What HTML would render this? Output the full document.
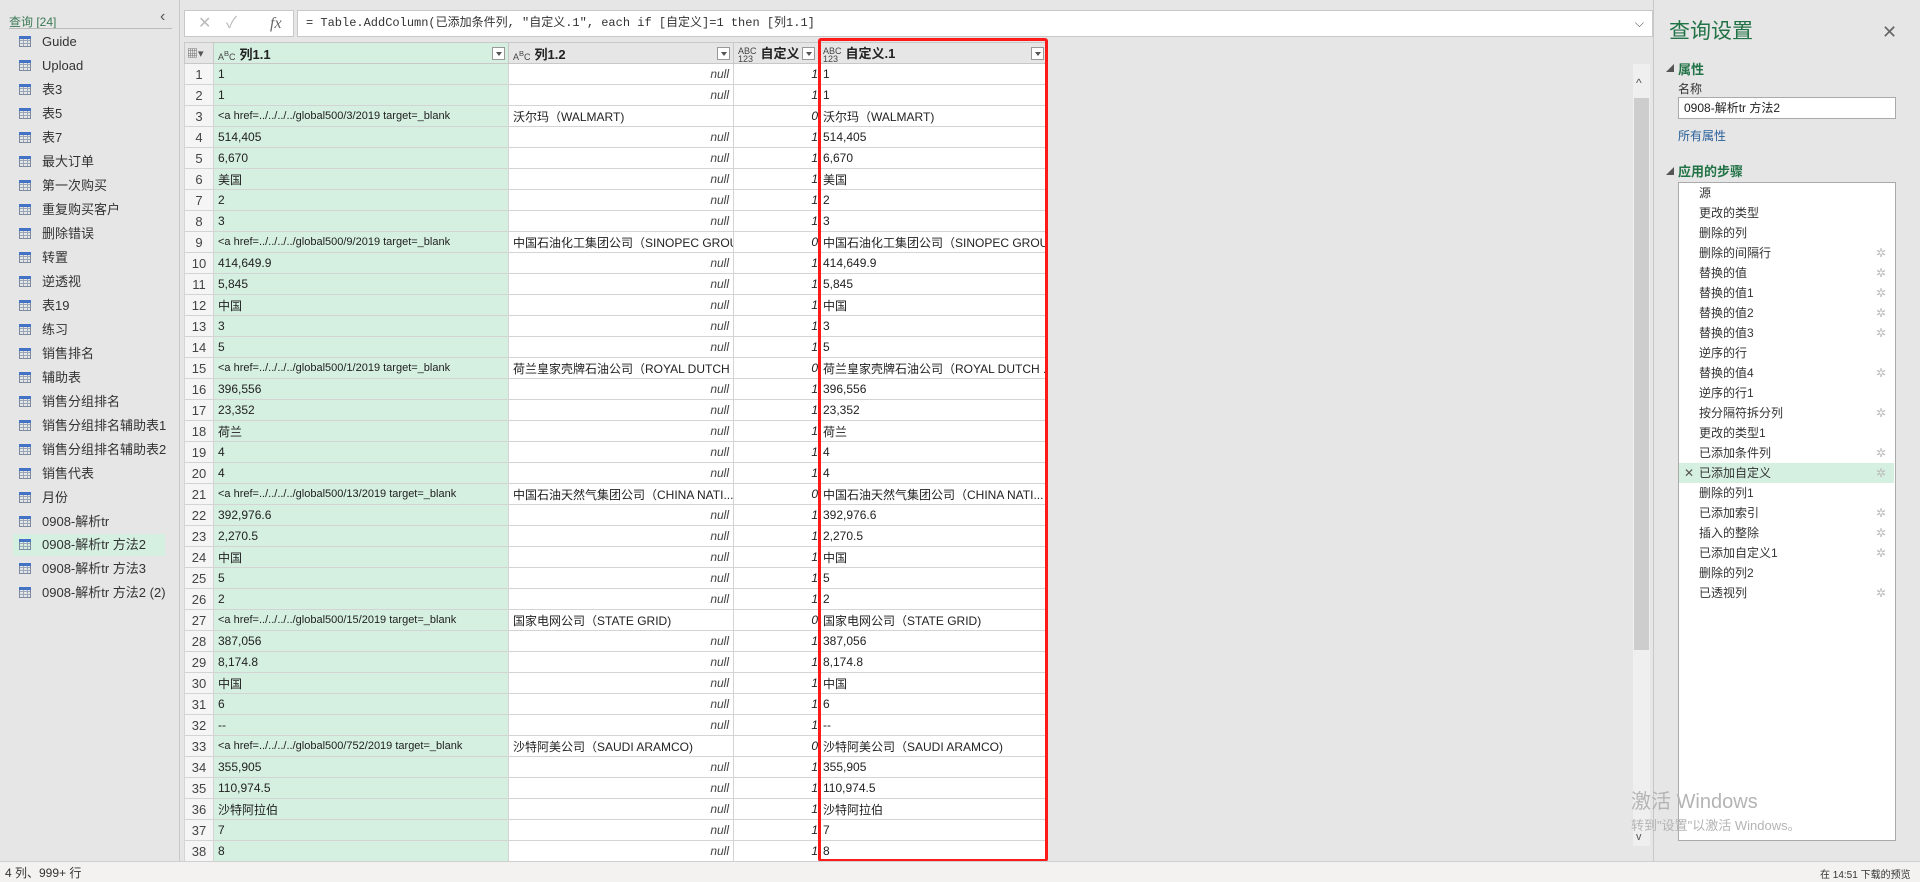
<!DOCTYPE html>
<html><head><meta charset="utf-8"><style>
*{box-sizing:border-box;margin:0;padding:0}
body{width:1920px;height:882px;overflow:hidden;background:#e6e6e6;font-family:"Liberation Sans","Noto Sans CJK SC",sans-serif;position:relative;color:#222}
.abs{position:absolute}
.lp-item{position:absolute;left:0;width:175px;height:22px;font-size:13px;line-height:22px;padding-left:42px;color:#333;white-space:nowrap}
.lp-item i{position:absolute;left:19px;top:5px;width:12px;height:11px;border:1px solid #7a8aa0;background:repeating-linear-gradient(90deg,transparent 0 3px,#9aa7b8 3px 4px),repeating-linear-gradient(0deg,transparent 0 2px,#9aa7b8 2px 3px);}
.lp-item i:before{content:"";position:absolute;left:-1px;top:-1px;width:12px;height:3px;background:#4472c4}
table{border-collapse:collapse;position:absolute;left:184px;top:42px;width:863px;table-layout:fixed;font-size:12px}
td,th{border:1px solid #d4d4d4;height:21px;padding:0 4px;white-space:nowrap;overflow:hidden;font-weight:normal}
th{background:#e6e6e6;text-align:left;border-color:#c8c8c8;position:relative;font-size:13px;font-weight:bold}
td.n{color:#444;font-size:13px;padding:0;background:#f5f5f5;text-align:center}
td.c1{background:#d5efe0}
td.c2{background:#fff;text-align:right;font-style:italic;color:#444}
td.c2.t{text-align:left;font-style:normal;color:#222}
td.c3{background:#fff;text-align:right;font-style:italic;padding-right:0}
td.c4{background:#fff}
.dd{position:absolute;right:3px;top:4px;width:13px;height:13px;border:1px solid #999;background:#fff}
.dd:after{content:"";position:absolute;left:3px;top:4px;border:3px solid transparent;border-top:4px solid #555}
.ty{font-size:9px;font-weight:normal;color:#444;display:inline-block;line-height:8px;vertical-align:middle;margin-right:4px}
.step{position:absolute;left:1679px;width:215px;height:20px;font-size:12px;line-height:20px;padding-left:20px;color:#333}
.g{position:absolute;right:8px;top:0;color:#bbb;font-size:12px}
</style></head><body>
<div class="abs" style="left:9px;top:13px;font-size:12px;color:#3c7a55">查询 [24]</div>
<div class="abs" style="left:9px;top:28px;width:163px;height:1px;background:#bbb"></div>
<div class="abs" style="left:160px;top:8px;font-size:16px;color:#555">‹</div>
<div class="abs" style="left:179px;top:0;width:1px;height:861px;background:#c8c8c8"></div>
<div class="lp-item" style="top:31px"><i></i>Guide</div>
<div class="lp-item" style="top:55px"><i></i>Upload</div>
<div class="lp-item" style="top:79px"><i></i>表3</div>
<div class="lp-item" style="top:103px"><i></i>表5</div>
<div class="lp-item" style="top:127px"><i></i>表7</div>
<div class="lp-item" style="top:151px"><i></i>最大订单</div>
<div class="lp-item" style="top:175px"><i></i>第一次购买</div>
<div class="lp-item" style="top:199px"><i></i>重复购买客户</div>
<div class="lp-item" style="top:223px"><i></i>删除错误</div>
<div class="lp-item" style="top:247px"><i></i>转置</div>
<div class="lp-item" style="top:271px"><i></i>逆透视</div>
<div class="lp-item" style="top:295px"><i></i>表19</div>
<div class="lp-item" style="top:319px"><i></i>练习</div>
<div class="lp-item" style="top:343px"><i></i>销售排名</div>
<div class="lp-item" style="top:367px"><i></i>辅助表</div>
<div class="lp-item" style="top:391px"><i></i>销售分组排名</div>
<div class="lp-item" style="top:415px"><i></i>销售分组排名辅助表1</div>
<div class="lp-item" style="top:439px"><i></i>销售分组排名辅助表2</div>
<div class="lp-item" style="top:463px"><i></i>销售代表</div>
<div class="lp-item" style="top:487px"><i></i>月份</div>
<div class="lp-item" style="top:511px"><i></i>0908-解析tr</div>
<div class="lp-item" style="top:534px;left:13px;width:152px;padding-left:29px;background:#d5efe0"><i style="left:6px"></i>0908-解析tr 方法2</div>
<div class="lp-item" style="top:558px"><i></i>0908-解析tr 方法3</div>
<div class="lp-item" style="top:582px"><i></i>0908-解析tr 方法2 (2)</div>

<div class="abs" style="left:184px;top:10px;width:110px;height:27px;background:#fff;border:1px solid #c8c8c8;font-size:16px;color:#bbb;line-height:25px">
<span class="abs" style="left:13px">✕</span><span class="abs" style="left:41px">✓</span><span class="abs" style="left:85px;font-family:'Liberation Serif',serif;font-style:italic;color:#666">fx</span></div>
<div class="abs" style="left:297px;top:10px;width:1356px;height:27px;background:#fff;border:1px solid #c8c8c8;font-family:'Liberation Mono','Noto Sans CJK SC',monospace;font-size:12px;line-height:25px;padding-left:8px;color:#333">= Table.AddColumn(已添加条件列, "自定义.1", each if [自定义]=1 then [列1.1]
<span class="abs" style="right:8px;top:0;color:#555;font-family:'Liberation Sans',sans-serif;font-size:12px">⌵</span></div>

<table>
<colgroup><col style="width:29px"><col style="width:295px"><col style="width:225px"><col style="width:85px"><col style="width:229px"></colgroup>
<tr><th style="background:#e6e6e6;font-weight:normal;color:#555;font-size:11px;padding:0 2px">▦▾</th><th style="background:#d5efe0"><span class="ty">A<sup>B</sup>C</span>列1.1<span class="dd"></span></th><th><span class="ty">A<sup>B</sup>C</span>列1.2<span class="dd"></span></th><th><span class="ty">ABC<br>123</span>自定义<span class="dd"></span></th><th><span class="ty">ABC<br>123</span>自定义.1<span class="dd"></span></th></tr>
<tr><td class="n">1</td><td class="c1">1</td><td class="c2">null</td><td class="c3">1</td><td class="c4">1</td></tr>
<tr><td class="n">2</td><td class="c1">1</td><td class="c2">null</td><td class="c3">1</td><td class="c4">1</td></tr>
<tr><td class="n">3</td><td class="c1" style="font-size:11px">&lt;a href=../../../../global500/3/2019 target=_blank</td><td class="c2 t">沃尔玛（WALMART)</td><td class="c3">0</td><td class="c4">沃尔玛（WALMART)</td></tr>
<tr><td class="n">4</td><td class="c1">514,405</td><td class="c2">null</td><td class="c3">1</td><td class="c4">514,405</td></tr>
<tr><td class="n">5</td><td class="c1">6,670</td><td class="c2">null</td><td class="c3">1</td><td class="c4">6,670</td></tr>
<tr><td class="n">6</td><td class="c1">美国</td><td class="c2">null</td><td class="c3">1</td><td class="c4">美国</td></tr>
<tr><td class="n">7</td><td class="c1">2</td><td class="c2">null</td><td class="c3">1</td><td class="c4">2</td></tr>
<tr><td class="n">8</td><td class="c1">3</td><td class="c2">null</td><td class="c3">1</td><td class="c4">3</td></tr>
<tr><td class="n">9</td><td class="c1" style="font-size:11px">&lt;a href=../../../../global500/9/2019 target=_blank</td><td class="c2 t">中国石油化工集团公司（SINOPEC GROU...</td><td class="c3">0</td><td class="c4">中国石油化工集团公司（SINOPEC GROU...</td></tr>
<tr><td class="n">10</td><td class="c1">414,649.9</td><td class="c2">null</td><td class="c3">1</td><td class="c4">414,649.9</td></tr>
<tr><td class="n">11</td><td class="c1">5,845</td><td class="c2">null</td><td class="c3">1</td><td class="c4">5,845</td></tr>
<tr><td class="n">12</td><td class="c1">中国</td><td class="c2">null</td><td class="c3">1</td><td class="c4">中国</td></tr>
<tr><td class="n">13</td><td class="c1">3</td><td class="c2">null</td><td class="c3">1</td><td class="c4">3</td></tr>
<tr><td class="n">14</td><td class="c1">5</td><td class="c2">null</td><td class="c3">1</td><td class="c4">5</td></tr>
<tr><td class="n">15</td><td class="c1" style="font-size:11px">&lt;a href=../../../../global500/1/2019 target=_blank</td><td class="c2 t">荷兰皇家壳牌石油公司（ROYAL DUTCH ...</td><td class="c3">0</td><td class="c4">荷兰皇家壳牌石油公司（ROYAL DUTCH ...</td></tr>
<tr><td class="n">16</td><td class="c1">396,556</td><td class="c2">null</td><td class="c3">1</td><td class="c4">396,556</td></tr>
<tr><td class="n">17</td><td class="c1">23,352</td><td class="c2">null</td><td class="c3">1</td><td class="c4">23,352</td></tr>
<tr><td class="n">18</td><td class="c1">荷兰</td><td class="c2">null</td><td class="c3">1</td><td class="c4">荷兰</td></tr>
<tr><td class="n">19</td><td class="c1">4</td><td class="c2">null</td><td class="c3">1</td><td class="c4">4</td></tr>
<tr><td class="n">20</td><td class="c1">4</td><td class="c2">null</td><td class="c3">1</td><td class="c4">4</td></tr>
<tr><td class="n">21</td><td class="c1" style="font-size:11px">&lt;a href=../../../../global500/13/2019 target=_blank</td><td class="c2 t">中国石油天然气集团公司（CHINA NATI...</td><td class="c3">0</td><td class="c4">中国石油天然气集团公司（CHINA NATI...</td></tr>
<tr><td class="n">22</td><td class="c1">392,976.6</td><td class="c2">null</td><td class="c3">1</td><td class="c4">392,976.6</td></tr>
<tr><td class="n">23</td><td class="c1">2,270.5</td><td class="c2">null</td><td class="c3">1</td><td class="c4">2,270.5</td></tr>
<tr><td class="n">24</td><td class="c1">中国</td><td class="c2">null</td><td class="c3">1</td><td class="c4">中国</td></tr>
<tr><td class="n">25</td><td class="c1">5</td><td class="c2">null</td><td class="c3">1</td><td class="c4">5</td></tr>
<tr><td class="n">26</td><td class="c1">2</td><td class="c2">null</td><td class="c3">1</td><td class="c4">2</td></tr>
<tr><td class="n">27</td><td class="c1" style="font-size:11px">&lt;a href=../../../../global500/15/2019 target=_blank</td><td class="c2 t">国家电网公司（STATE GRID)</td><td class="c3">0</td><td class="c4">国家电网公司（STATE GRID)</td></tr>
<tr><td class="n">28</td><td class="c1">387,056</td><td class="c2">null</td><td class="c3">1</td><td class="c4">387,056</td></tr>
<tr><td class="n">29</td><td class="c1">8,174.8</td><td class="c2">null</td><td class="c3">1</td><td class="c4">8,174.8</td></tr>
<tr><td class="n">30</td><td class="c1">中国</td><td class="c2">null</td><td class="c3">1</td><td class="c4">中国</td></tr>
<tr><td class="n">31</td><td class="c1">6</td><td class="c2">null</td><td class="c3">1</td><td class="c4">6</td></tr>
<tr><td class="n">32</td><td class="c1">--</td><td class="c2">null</td><td class="c3">1</td><td class="c4">--</td></tr>
<tr><td class="n">33</td><td class="c1" style="font-size:11px">&lt;a href=../../../../global500/752/2019 target=_blank</td><td class="c2 t">沙特阿美公司（SAUDI ARAMCO)</td><td class="c3">0</td><td class="c4">沙特阿美公司（SAUDI ARAMCO)</td></tr>
<tr><td class="n">34</td><td class="c1">355,905</td><td class="c2">null</td><td class="c3">1</td><td class="c4">355,905</td></tr>
<tr><td class="n">35</td><td class="c1">110,974.5</td><td class="c2">null</td><td class="c3">1</td><td class="c4">110,974.5</td></tr>
<tr><td class="n">36</td><td class="c1">沙特阿拉伯</td><td class="c2">null</td><td class="c3">1</td><td class="c4">沙特阿拉伯</td></tr>
<tr><td class="n">37</td><td class="c1">7</td><td class="c2">null</td><td class="c3">1</td><td class="c4">7</td></tr>
<tr><td class="n">38</td><td class="c1">8</td><td class="c2">null</td><td class="c3">1</td><td class="c4">8</td></tr>
</table>
<div class="abs" style="left:818px;top:38px;width:230px;height:824px;border:3px solid #ff1a1a;border-radius:3px"></div>

<div class="abs" style="left:1633px;top:64px;width:17px;height:782px;background:#efefef"></div>
<div class="abs" style="left:1634px;top:98px;width:15px;height:552px;background:#cdcdcd"></div>
<div class="abs" style="left:1636px;top:76px;font-size:12px;color:#555">^</div>
<div class="abs" style="left:1636px;top:831px;font-size:11px;color:#555">v</div>
<div class="abs" style="left:1653px;top:0;width:1px;height:861px;background:#c8c8c8"></div>

<div class="abs" style="left:1669px;top:15px;font-size:21px;color:#217346">查询设置</div>
<div class="abs" style="left:1882px;top:22px;font-size:18px;color:#666">✕</div>
<div class="abs" style="left:1666px;top:63px;font-size:8px;color:#555">◢</div>
<div class="abs" style="left:1678px;top:59px;font-size:13px;font-weight:bold;color:#217346">属性</div>
<div class="abs" style="left:1678px;top:80px;font-size:12px;color:#333">名称</div>
<div class="abs" style="left:1678px;top:97px;width:218px;height:22px;background:#fff;border:1px solid #aaa;font-size:12px;line-height:20px;padding-left:5px;color:#222">0908-解析tr 方法2</div>
<div class="abs" style="left:1678px;top:127px;font-size:12px;color:#2a6099">所有属性</div>
<div class="abs" style="left:1666px;top:166px;font-size:8px;color:#555">◢</div>
<div class="abs" style="left:1678px;top:161px;font-size:13px;font-weight:bold;color:#217346">应用的步骤</div>
<div class="abs" style="left:1678px;top:182px;width:218px;height:659px;background:#fff;border:1px solid #aaa"></div>
<div class="step" style="top:183px">源</div>
<div class="step" style="top:203px">更改的类型</div>
<div class="step" style="top:223px">删除的列</div>
<div class="step" style="top:243px">删除的间隔行<span class="g">✲</span></div>
<div class="step" style="top:263px">替换的值<span class="g">✲</span></div>
<div class="step" style="top:283px">替换的值1<span class="g">✲</span></div>
<div class="step" style="top:303px">替换的值2<span class="g">✲</span></div>
<div class="step" style="top:323px">替换的值3<span class="g">✲</span></div>
<div class="step" style="top:343px">逆序的行</div>
<div class="step" style="top:363px">替换的值4<span class="g">✲</span></div>
<div class="step" style="top:383px">逆序的行1</div>
<div class="step" style="top:403px">按分隔符拆分列<span class="g">✲</span></div>
<div class="step" style="top:423px">更改的类型1</div>
<div class="step" style="top:443px">已添加条件列<span class="g">✲</span></div>
<div class="step" style="top:463px;background:#d5efe0"><span class="abs" style="left:5px;color:#555">✕</span>已添加自定义<span class="g">✲</span></div>
<div class="step" style="top:483px">删除的列1</div>
<div class="step" style="top:503px">已添加索引<span class="g">✲</span></div>
<div class="step" style="top:523px">插入的整除<span class="g">✲</span></div>
<div class="step" style="top:543px">已添加自定义1<span class="g">✲</span></div>
<div class="step" style="top:563px">删除的列2</div>
<div class="step" style="top:583px">已透视列<span class="g">✲</span></div>

<div class="abs" style="left:1631px;top:785px;font-size:20px;color:#b4b4b4">激活 Windows</div>
<div class="abs" style="left:1631px;top:815px;font-size:13px;color:#b4b4b4;white-space:nowrap">转到"设置"以激活 Windows。</div>

<div class="abs" style="left:0;top:861px;width:1920px;height:21px;background:#f3f2f1;border-top:1px solid #d0d0d0"></div>
<div class="abs" style="left:5px;top:864px;font-size:12px;color:#333">4 列、999+ 行</div>
<div class="abs" style="left:1820px;top:866px;font-size:10px;color:#333;white-space:nowrap">在 14:51 下载的预览</div>
</body></html>
